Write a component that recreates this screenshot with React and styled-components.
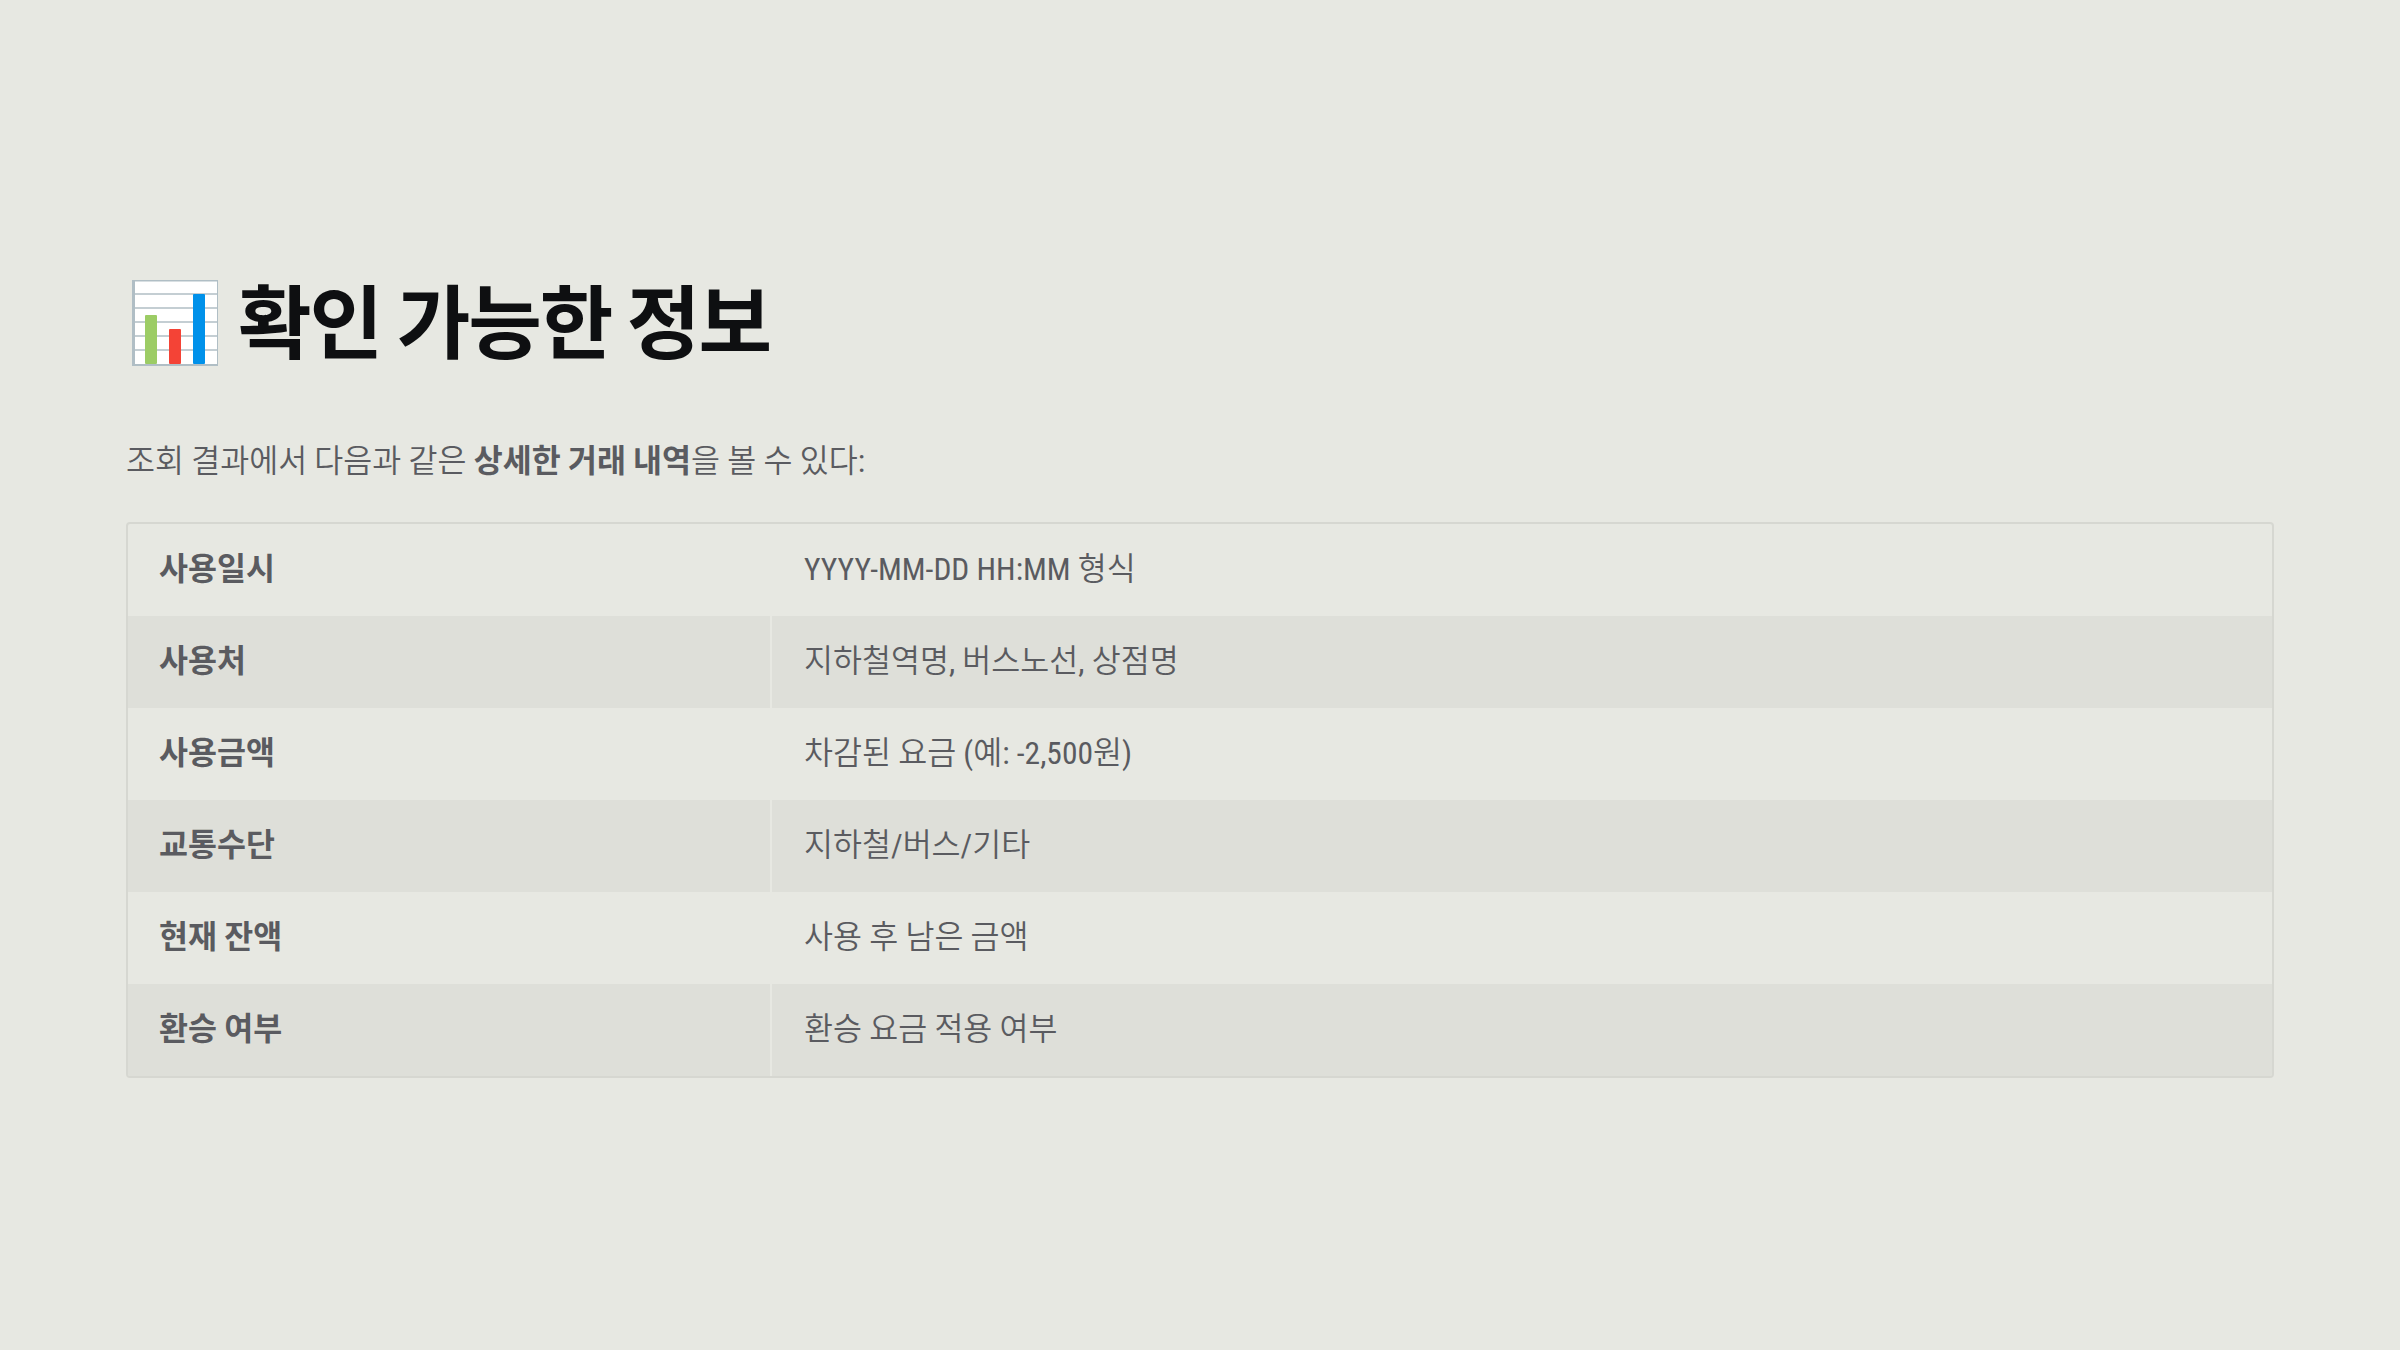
import React from "react";
import styled, { createGlobalStyle } from "styled-components";

const GlobalStyle = createGlobalStyle`
  html, body { margin: 0; padding: 0; background: #e7e8e2; }
  body { font-family: "Roboto", "Noto Sans CJK KR", sans-serif; font-stretch: condensed; }
`;

const rows = [
  ["사용일시", "YYYY-MM-DD HH:MM 형식"],
  ["사용처", "지하철역명, 버스노선, 상점명"],
  ["사용금액", "차감된 요금 (예: -2,500원)"],
  ["교통수단", "지하철/버스/기타"],
  ["현재 잔액", "사용 후 남은 금액"],
  ["환승 여부", "환승 요금 적용 여부"],
];

function ChartIcon() {
  return (
    <ChartSvg viewBox="0 0 86 86" width="86" height="86">
      <rect width="86" height="86" fill="#b0bec5" />
      <rect x="3" y="1.5" width="82" height="82.5" fill="#fff" />
      <g stroke="#b0bec5" strokeWidth="1.6">
        {[14, 28, 42, 56, 70].map((y) => (
          <line key={y} x1="3" x2="85" y1={y} y2={y} />
        ))}
      </g>
      <rect x="13" y="35" width="12" height="49" rx="1" fill="#9ccc65" />
      <rect x="37" y="49" width="12" height="35" rx="1" fill="#f44336" />
      <rect x="61" y="14" width="12" height="70" rx="1" fill="#0091ea" />
    </ChartSvg>
  );
}

export default function App() {
  return (
    <Page>
      <GlobalStyle />
      <Title>
        <ChartIcon />
        <span>확인 가능한 정보</span>
      </Title>
      <Intro>
        조회 결과에서 다음과 같은 <strong>상세한 거래 내역</strong>을 볼 수 있다:
      </Intro>
      <TableWrap>
        <Table>
          <tbody>
            {rows.map(([label, value]) => (
              <tr key={label}>
                <LabelCell>{label}</LabelCell>
                <ValueCell>{value}</ValueCell>
              </tr>
            ))}
          </tbody>
        </Table>
      </TableWrap>
    </Page>
  );
}

const Page = styled.div`
  box-sizing: border-box;
  height: 1350px;
  padding: 277px 126px 0;
  display: flex;
  flex-direction: column;
  color: #5a5b60;
`;

const Title = styled.h1`
  margin: 0 0 66px;
  padding-left: 6px;
  display: flex;
  align-items: center;
  gap: 20px;
  font-size: 80px;
  line-height: 96px;
  font-weight: 700;
  letter-spacing: -2px;
  word-spacing: -1px;
  color: #0e0f11;
`;

const ChartSvg = styled.svg`
  flex: none;
  margin-top: -4px;
`;

const Intro = styled.p`
  margin: 0 0 37px;
  font-family: "Roboto", "Noto Sans CJK KR DemiLight", "Noto Sans CJK KR", sans-serif;
  font-size: 31.5px;
  line-height: 46px;
  font-weight: 400;
  strong {
    font-family: "Roboto", "Noto Sans CJK KR", sans-serif;
    font-weight: 700;
  }
`;

const TableWrap = styled.div`
  border: 2px solid #d6d7d1;
  border-radius: 4px;
  overflow: hidden;
`;

const Table = styled.table`
  width: 100%;
  border-collapse: collapse;
  font-size: 31.5px;

  tr:nth-child(even) {
    background: #dedfd9;
  }
`;

const LabelCell = styled.td`
  box-sizing: border-box;
  width: 643px;
  height: 92px;
  padding: 0 32px 8px 31px;
  font-weight: 700;
`;

const ValueCell = styled.td`
  box-sizing: border-box;
  padding: 0 32px 8px;
  font-family: "Roboto", "Noto Sans CJK KR DemiLight", "Noto Sans CJK KR", sans-serif;
  font-weight: 400;
  border-left: 2px solid #e7e8e2;
`;
